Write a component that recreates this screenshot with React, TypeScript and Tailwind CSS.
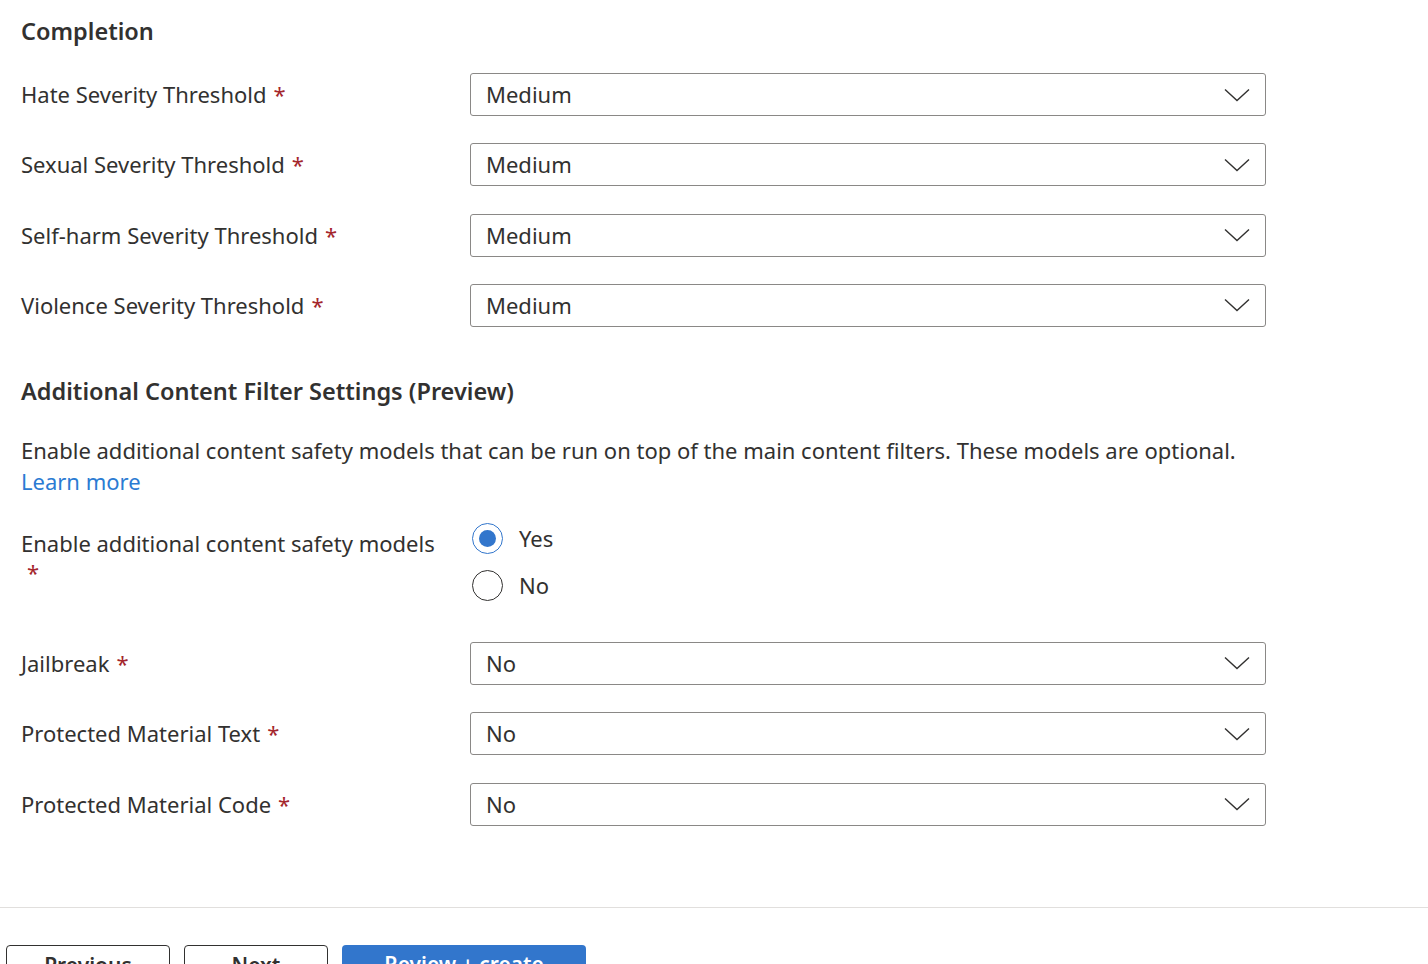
import React from "react";

const font = { fontFamily: '"Noto Sans", "Open Sans", sans-serif' };

function Chevron() {
  return (
    <svg width="26" height="14" viewBox="0 0 26 14" fill="none">
      <path d="M1 1.5 L13 12.5 L25 1.5" stroke="#323130" strokeWidth="1.4" />
    </svg>
  );
}

function Req() {
  return <span className="text-[#a4262c] ml-[7px]">*</span>;
}

function Row({ label, value }: { label: string; value: string }) {
  return (
    <div className="flex items-center h-[43px]">
      <div className="w-[449px] shrink-0 text-[22px] leading-[30px] pb-[1px] text-[#323130]">
        {label}
        <Req />
      </div>
      <div className="w-[796px] h-[43px] border border-[#8a8886] rounded-[3px] flex items-center justify-between pl-[15px] pr-[15px] text-[22px] text-[#323130]">
        <span>{value}</span>
        <Chevron />
      </div>
    </div>
  );
}

export default function App() {
  return (
    <div className="w-[1428px] h-[964px] overflow-hidden bg-white relative" style={font}>
      <div className="pl-[21px]">
        <h2 className="pt-[15px] h-[47px] text-[23.5px] leading-[32px] font-semibold text-[#323130]">Completion</h2>
        <div className="mt-[26px] flex flex-col gap-[27.3px]">
          <Row label="Hate Severity Threshold" value="Medium" />
          <Row label="Sexual Severity Threshold" value="Medium" />
          <Row label="Self-harm Severity Threshold" value="Medium" />
          <Row label="Violence Severity Threshold" value="Medium" />
        </div>
        <h2 className="mt-[48px] text-[23.5px] leading-[32px] font-semibold text-[#323130]">
          Additional Content Filter Settings (Preview)
        </h2>
        <p className="mt-[28px] text-[22px] leading-[31px] text-[#323130] w-[1250px]">
          Enable additional content safety models that can be run on top of the main content filters. These models are optional.
          <br />
          <span className="text-[#2b7bd3]">Learn more</span>
        </p>
        <div className="mt-[26px] flex">
          <div className="w-[449px] shrink-0 pt-[6px] text-[22px] leading-[29px] text-[#323130]">
            <div className="w-[430px]">
              Enable additional content safety models
              <div className="text-[#a4262c] pl-[6px]">*</div>
            </div>
          </div>
          <div className="flex flex-col gap-[16px] text-[22px] text-[#323130]">
            <div className="flex items-center h-[31px]">
              <div className="ml-[2px] w-[31px] h-[31px] rounded-full border border-[#3276cc] flex items-center justify-center">
                <div className="w-[17px] h-[17px] rounded-full bg-[#3276cc]" />
              </div>
              <span className="ml-[16px]">Yes</span>
            </div>
            <div className="flex items-center h-[31px]">
              <div className="ml-[2px] w-[31px] h-[31px] rounded-full border border-[#323130]" />
              <span className="ml-[16px]">No</span>
            </div>
          </div>
        </div>
        <div className="mt-[41px] flex flex-col gap-[27.5px]">
          <Row label="Jailbreak" value="No" />
          <Row label="Protected Material Text" value="No" />
          <Row label="Protected Material Code" value="No" />
        </div>
      </div>
      <div className="absolute left-0 right-0 top-[907px] border-t border-[#e1dfdd]" />
      <div className="absolute left-[6px] top-[945px] flex gap-[14px]">
        <div className="w-[164px] h-[44px] border border-[#323130] rounded-[4px] flex justify-center pt-[4px] text-[21px] font-semibold text-[#323130]">Previous</div>
        <div className="w-[144px] h-[44px] border border-[#323130] rounded-[4px] flex justify-center pt-[4px] text-[21px] font-semibold text-[#323130]">Next</div>
        <div className="w-[244px] h-[44px] bg-[#3276cc] rounded-[4px] flex justify-center pt-[4px] text-[21px] font-semibold text-white">Review + create</div>
      </div>
    </div>
  );
}
